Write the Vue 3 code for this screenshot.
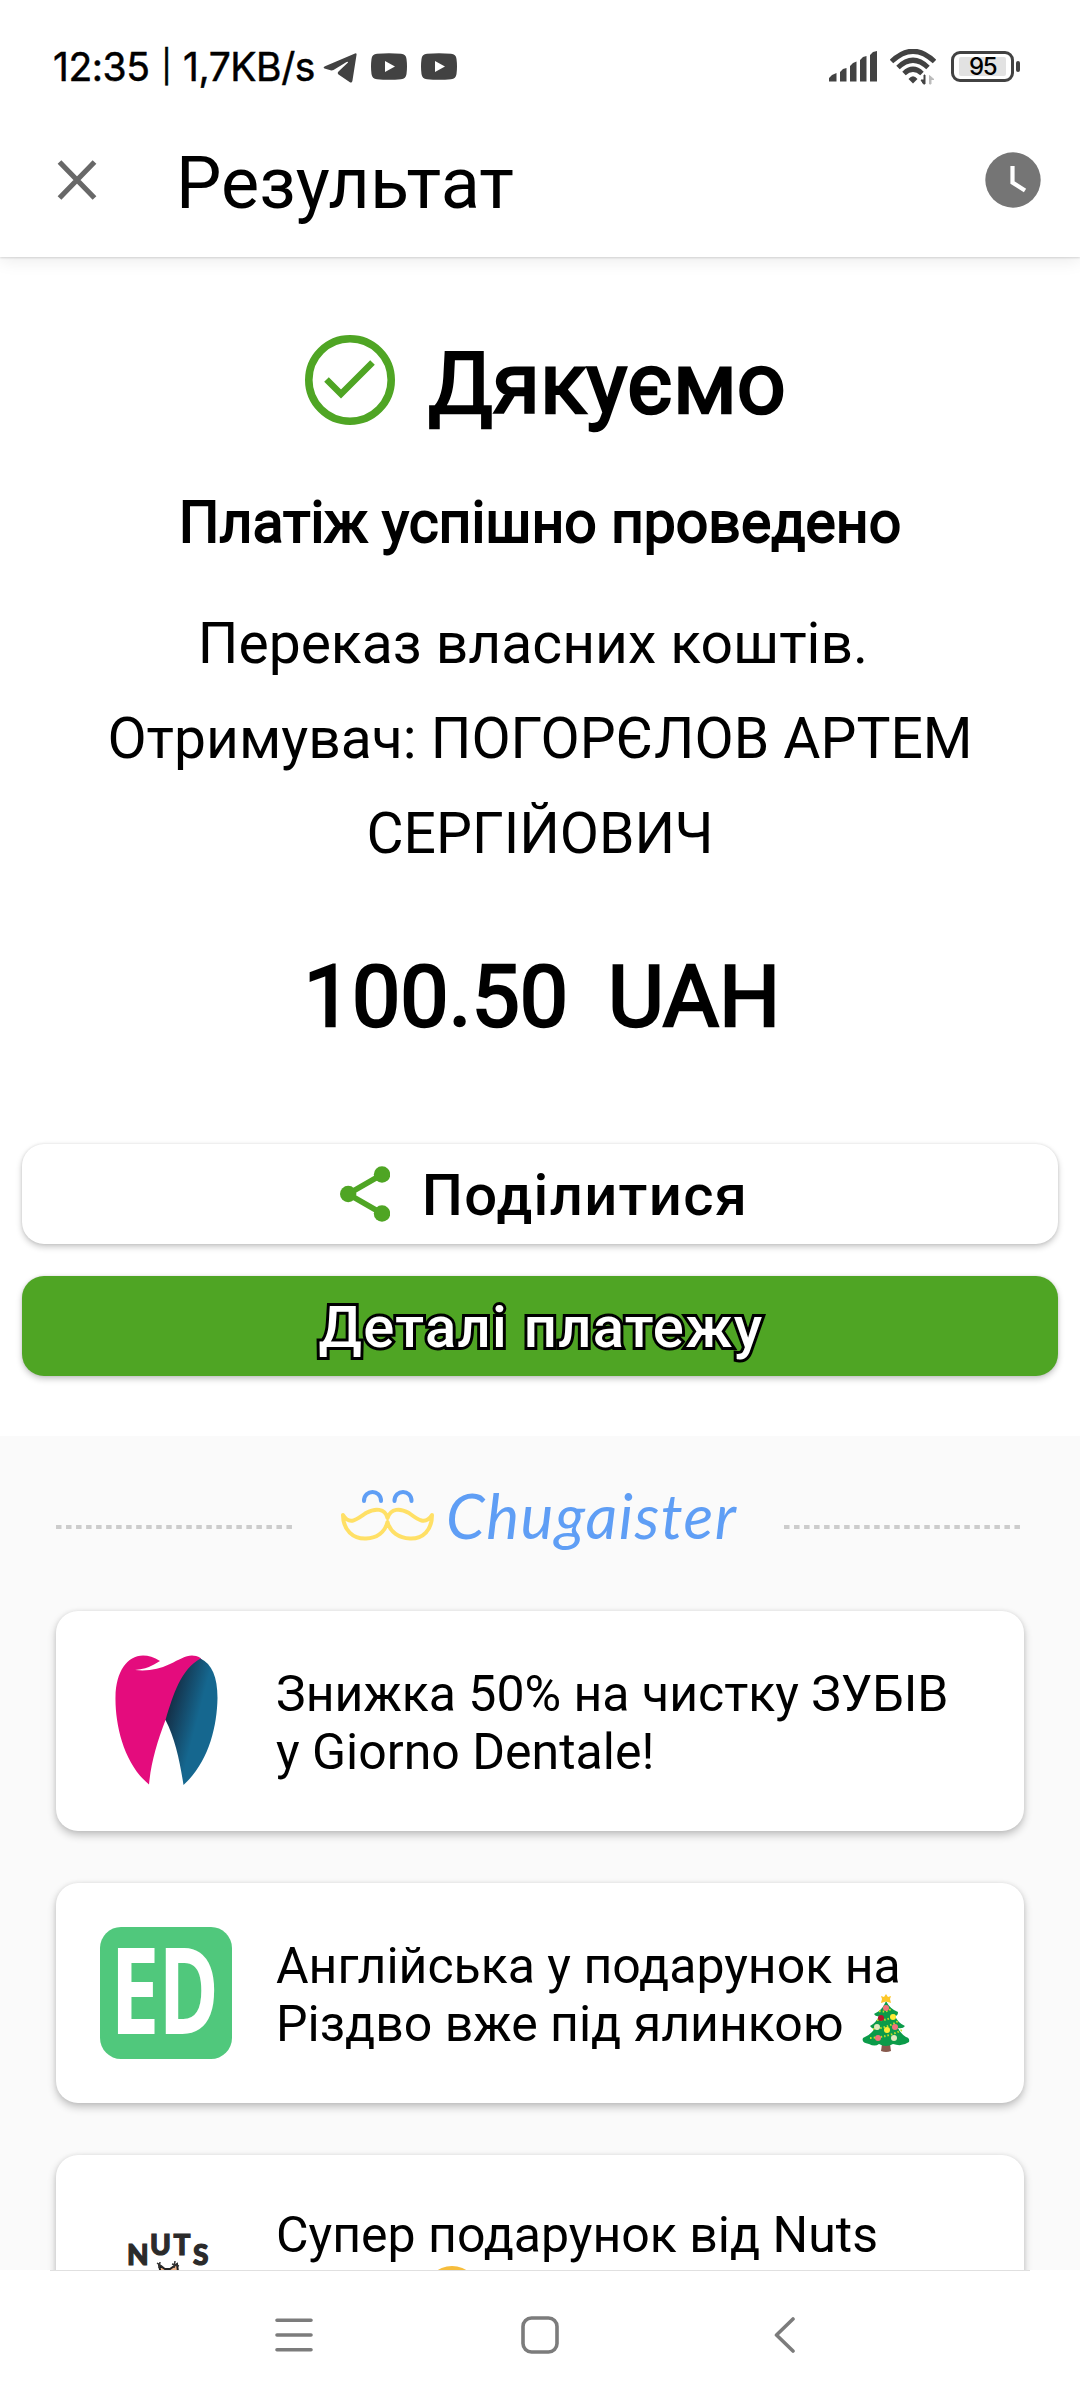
<script setup>
const lines = ['Переказ власних коштів. ', 'Отримувач: ПОГОРЄЛОВ АРТЕМ', 'СЕРГІЙОВИЧ']
</script>

<template>
  <div class="screen">
    <div class="status">
      <span class="time">12:35 <span class="pipe">|</span> 1,7KB/s</span>
      <svg class="tg" width="34" height="30" viewBox="0 0 34 30"><path d="M2 13.200L32 .4Q34 0 33.500 2L29.400 28Q28.800 30.500 26.500 29L15.500 21.500Q14 20 15.500 18.500L25 9.500Q25.300 8.300 23.600 9L10.500 17Q9 17.700 7.500 17.300L1.500 15.600Q-.5 14.400 2 13.200Z" fill="#424242"/></svg>
      <svg v-for="n in 2" :key="n" class="yt" width="36" height="27" viewBox="0 0 36 27"><path d="M6 .8Q18-.4 30 .8Q35 1.300 35.500 6Q36.500 13.500 35.500 21Q35 25.700 30 26.200Q18 27.400 6 26.200Q1 25.700 .5 21Q-.5 13.500 .5 6Q1 1.300 6 .8Z" fill="#424242"/><path d="M14 8L24 13.500L14 19Z" fill="#fff"/></svg>
      <span class="grow"></span>
      <svg class="signal" width="48" height="31" viewBox="0 0 48 31" fill="#424242"><path d="M0 30.500V27L3 24L7.500 22V30.500ZM11 30.500V21L14 18L17.500 17V30.500ZM21 30.500V15L24 12L27.500 10.500V30.500ZM31 30.500V9L34 6L37.500 5V30.500ZM41 30.500V4L44 1L48 0V30.500Z"/></svg>
      <svg class="wifi" width="46" height="36" viewBox="0 0 46 36"><g fill="none" stroke="#424242" stroke-width="5"><path d="M1.500 12.500Q23-8 44.500 12.500"/><path d="M8 18.500Q23 4 38 18.500"/><path d="M14 24.500Q23 16 32 24.500"/></g><path d="M18.500 30Q23 24.500 27.500 30L23 34.500Z" fill="#424242"/><path d="M35 26V35H33.500L31 31H34V26Z" fill="#424242" stroke="#424242"/><path d="M39.500 35V26.500L44 30.500H41V35Z" fill="#bbb" stroke="#bbb"/></svg>
      <div class="battery"><i></i><b>95</b></div>
      <span class="tip"></span>
    </div>

    <header class="bar">
      <svg class="close" width="40" height="40" viewBox="0 0 40 40"><path d="M2.500 2L37.500 38M37.500 2L2.500 38" stroke="#686868" stroke-width="5.200"/></svg>
      <h2>Результат</h2>
      <svg class="clock" width="56" height="56" viewBox="0 0 56 56"><circle cx="28" cy="28" r="27.700" fill="#757575"/><path d="M27.500 14V30.500L40 38.500" fill="none" stroke="#fff" stroke-width="4.200"/></svg>
    </header>

    <main>
      <div class="thanks">
        <svg width="90" height="90" viewBox="0 0 90 90" fill="none" stroke="#4fa524"><circle cx="45" cy="45" r="41.200" stroke-width="7.600"/><path d="M21.500 44.500L36 59L67.500 27.500" stroke-width="6.500"/></svg>
        <h1>Дякуємо</h1>
      </div>
      <p class="ok">Платіж успішно проведено</p>
      <div class="info"><p v-for="l in lines" :key="l">{{ l }}</p></div>
      <div class="amount"><span>100.50</span><span>UAH</span></div>
      <button class="btn share">
        <svg width="50" height="56" viewBox="0 0 50 56" fill="#4fa524"><path d="M42 8.500L8 28L42 47.500" fill="none" stroke="#4fa524" stroke-width="5.500"/><circle cx="42" cy="8.500" r="8.200"/><circle cx="8.200" cy="28" r="8.200"/><circle cx="42" cy="47.500" r="8.200"/></svg>
        <span>Поділитися</span>
      </button>
      <button class="btn details"><span>Деталі платежу</span></button>
    </main>

    <section class="promo">
      <div class="brand">
        <svg class="dash" width="237" height="4" viewBox="0 0 237 4"><path d="M0 2H237" stroke="#ccc" stroke-width="4" stroke-dasharray="5.500 4.520"/></svg>
        <svg class="logo" width="440" height="130" viewBox="0 0 440 130">
          <g fill="none" stroke-linecap="round" stroke-linejoin="round" stroke-width="4">
            <g stroke="#5f9ef5"><path d="M44 41C44 29 61 29 61 41"/><path d="M74.500 41C74.500 29 91.500 29 91.500 41"/></g>
            <path stroke="#ffe066" d="M67.500 58C65 48 55 48 46 53C37 59 30 66 23 55C23 70 33 79 46 78.500C57 78 65 72 67.500 62C70 72 79 78 90 78.500C103 79 112 70 112 55C105 66 97 59 89 53C80 48 71 48 67.500 58Z"/>
          </g>
          <text x="126" y="79" textLength="290" lengthAdjust="spacing">Chugaister</text>
        </svg>
        <svg class="dash" width="237" height="4" viewBox="0 0 237 4"><path d="M0 2H237" stroke="#ccc" stroke-width="4" stroke-dasharray="5.500 4.520"/></svg>
      </div>

      <article class="card">
        <svg class="thumb" width="132" height="132" viewBox="0 0 132 132">
          <defs><linearGradient id="blue" x1=".1" y1=".2" x2=".65" y2=".55"><stop offset="0" stop-color="#14283e"/><stop offset=".9" stop-color="#15678f"/></linearGradient></defs>
          <path d="M49 129.500C24 109 15 70 15.500 42C16 8 36-9 60 6L54 9.500Q46 14 35 15Q54 17 70 9C83 3 90-3 100.500 3L108 14L85 70L65.500 65C57 87 51 108 49 129.500Z" fill="#e40c7d"/>
          <path d="M100.500 3.500C81 14 73 40 65.500 65C75 83 80 107 83.500 130C108 108 117 73 117.500 43C117.500 22 112 9 100.500 3.500Z" fill="url(#blue)"/>
        </svg>
        <p>Знижка 50% на чистку ЗУБІВ<br>у Giorno Dentale!</p>
      </article>

      <article class="card">
        <svg class="thumb" width="132" height="132" viewBox="0 0 132 132"><rect width="132" height="132" rx="21" fill="#50c87c"/><g class="ed"><text transform="translate(10 107) scale(.74 1)">E</text><text transform="translate(58.500 107) scale(.68 1)">D</text></g></svg>
        <p>Англійська у подарунок на<br>Різдво вже під ялинкою
          <svg class="tree" width="48" height="58" viewBox="0 0 48 58">
            <path d="M20 50H28L29 57Q24 59 19 57Z" fill="#87594c"/>
            <path d="M24 7C21 14 18 17 12 20Q14 23 17 22Q14 29 8 32Q11 36 13 34Q9 41 1 44Q-1 49 7 50Q13 53 17 50Q24 54 31 50Q40 53 47 48Q48 44 44 43Q38 39 36 34Q41 35 43 32Q36 29 33 22Q36 22 36 18Q28 15 24 7Z" fill="#0b9b49"/>
            <path d="M17 17Q25 19 30 14M15 26Q26 27 33 21M11 35Q26 34 36 27M8 44Q27 43 40 36" fill="none" stroke="#c4de27" stroke-width="2" stroke-dasharray="1.500 2"/>
            <path d="M24 0L26 3L29 2L28 5L29 9L24 7.500L19 9L20 5L19 2L22 3Z" fill="#fcc728"/>
            <g fill="#f2737b"><circle cx="24" cy="14" r="3"/><circle cx="33" cy="33" r="3"/><circle cx="16" cy="44" r="3"/></g><circle cx="19" cy="24" r="3" fill="#b5172b"/><g fill="#ffec36"><circle cx="31" cy="23" r="3"/><circle cx="25" cy="36" r="3"/></g><g fill="#dfe8bc"><circle cx="15" cy="33" r="3"/><circle cx="32" cy="44" r="3"/></g>
          </svg>
        </p>
      </article>

      <article class="card third">
        <svg class="thumb" width="132" height="132" viewBox="0 0 132 132">
          <g class="nuts"><text x="27" y="65.500">N</text><text x="50" y="56">U</text><text x="73.500" y="56">T</text><text x="93" y="65.500">S</text></g>
          <path d="M59 66L62 80H79L77 65L70 70H65Z" fill="#efb48a" stroke="#222" stroke-width="2"/><path d="M57 64L63 68M60 63L59 69M72 65L79 67M75 62L74 69" stroke="#333" stroke-width="1.500"/>
        </svg>
        <p>Супер подарунок від Nuts</p>
        <svg class="face" width="56" height="56" viewBox="0 0 56 56"><circle cx="28" cy="28" r="27" fill="#f6bd3c"/></svg>
      </article>
    </section>

    <nav>
      <svg width="38" height="34" viewBox="0 0 38 34"><path d="M2 2.200H36M2 17H36M2 31.800H36" stroke="#7c7c7c" stroke-width="3.600" stroke-linecap="round"/></svg>
      <svg class="home" width="38" height="38" viewBox="0 0 38 38"><rect x="2" y="2" width="34" height="34" rx="8.500" fill="none" stroke="#7c7c7c" stroke-width="3.600"/></svg>
      <svg width="22" height="36" viewBox="0 0 22 36"><path d="M19 2L2.500 18L19 34" fill="none" stroke="#7c7c7c" stroke-width="3.600" stroke-linecap="round" stroke-linejoin="round"/></svg>
    </nav>
  </div>
</template>

<style>
body { margin: 0; background: #fff; }
</style>

<style scoped>
.screen { width: 1080px; height: 2400px; overflow: hidden; background: #fff; color: #000; font-family: Roboto, "Noto Sans", sans-serif; display: flex; flex-direction: column; }
h1, h2, p { margin: 0; font-weight: 400; }
svg { display: block; flex: none; }
.status { height: 102px; flex: none; box-sizing: border-box; padding: 31px 60px 0 53px; display: flex; align-items: center; position: relative; z-index: 1; background: #fff; }
.time { font: 400 39px/71px Inter, sans-serif; width: 262px; white-space: pre; letter-spacing: -.45px; -webkit-text-stroke: .5px #000; }
.pipe { font-size: 32px; line-height: 32px; vertical-align: 3px; margin: 0 1.200px; }
.tg { margin: 2px 14px 0 8px; }
.yt { margin-right: 14px; }
.grow { flex: 1; }
.signal { margin-right: 13px; }
.wifi { margin-right: 15px; }
.battery { width: 63px; height: 31px; box-sizing: border-box; border: 3.500px solid #424242; border-radius: 9px; display: flex; justify-content: center; align-items: center; position: relative; }
.battery i { position: absolute; inset: 3px 5px; background: #e2e2e2; border-radius: 2px; }
.battery b { position: relative; font: 500 24px/24px Inter, sans-serif; letter-spacing: -1.500px; }
.tip { width: 4px; height: 11px; background: #424242; border-radius: 2px; margin-left: 2px; }
.bar { height: 155px; flex: none; display: flex; align-items: center; padding: 0 39px 0 57px; box-shadow: 0 1px 2px rgba(0,0,0,.14), 0 4px 16px rgba(0,0,0,.08); }
.bar h2 { flex: 1; margin-left: 79px; padding-top: 9px; font-size: 72px; line-height: 84px; }
main { height: 1179px; flex: none; box-sizing: border-box; padding: 78px 22px 0; display: flex; flex-direction: column; }
.thanks { display: flex; justify-content: center; gap: 33px; height: 96px; padding-left: 11px; }
.thanks h1 { font-size: 86px; line-height: 97px; -webkit-text-stroke: 2.600px #000; }
.ok { margin-top: 62px; text-align: center; font-size: 57px; line-height: 60px; -webkit-text-stroke: 1.800px #000; }
.info { margin-top: 43px; height: 287px; text-align: center; font-size: 57px; line-height: 95px; white-space: pre; }
.amount { margin-top: 69px; height: 89px; display: flex; justify-content: center; gap: 40px; padding-left: 4px; font-size: 86px; line-height: 90px; -webkit-text-stroke: 2.600px #000; }
.btn { width: 100%; height: 100px; flex: none; box-sizing: border-box; border: 0; border-radius: 22px; padding: 2px 0 0; display: flex; align-items: center; justify-content: center; font: 500 58px/64px Roboto, sans-serif; letter-spacing: 1.300px; box-shadow: 0 3px 6px rgba(0,0,0,.22), 0 0 3px rgba(0,0,0,.1); }
.share { margin-top: 103px; background: #fff; color: #000; gap: 32px; padding-left: 8px; }
.share svg { margin-top: -2px; }
.details { margin-top: 32px; background: #4fa524; color: #fff; padding-left: 2px; }
.details span { -webkit-text-stroke: 6px #000; paint-order: stroke fill; }
.promo { height: 834px; flex: none; box-sizing: border-box; overflow: hidden; padding: 24px 56px 0; background: #fafafa; }
.brand { height: 151px; display: flex; align-items: flex-start; }
.dash { margin-top: 65px; }
.logo { margin: 0 24px 0 27px; }
.logo text { font: italic 400 62px Lato, sans-serif; fill: #5f9ef5; }
.card { height: 220px; box-sizing: border-box; margin-bottom: 52px; border-radius: 22px; background: #fff; display: flex; align-items: center; padding-left: 44px; position: relative; box-shadow: 0 4px 8px rgba(0,0,0,.24), 0 0 4px rgba(0,0,0,.07); }
.card p { margin: 4px 0 0 44px; font-size: 50px; line-height: 58px; white-space: nowrap; }
.thumb { overflow: visible; }
.ed { font: 700 120px "Open Sans", sans-serif; fill: #fff; }
.tree { display: inline-block; vertical-align: -11px; margin: -10px 0 0 6px; }
.nuts { font: 900 28px Lato, sans-serif; fill: #2b2b2b; stroke: #2b2b2b; stroke-width: 1.200px; }
.third { align-items: flex-start; padding-top: 44px; }
.third p { margin-top: 7px; }
.face { position: absolute; left: 368px; top: 110px; }
nav { flex: 1; display: flex; align-items: center; padding: 0 284px 0 275px; justify-content: space-between; box-sizing: border-box; background: linear-gradient(#e0e0e0, #e0e0e0) 50px 0 / 980px 1px no-repeat #fff; }
.home { margin-left: -8px; }
</style>
